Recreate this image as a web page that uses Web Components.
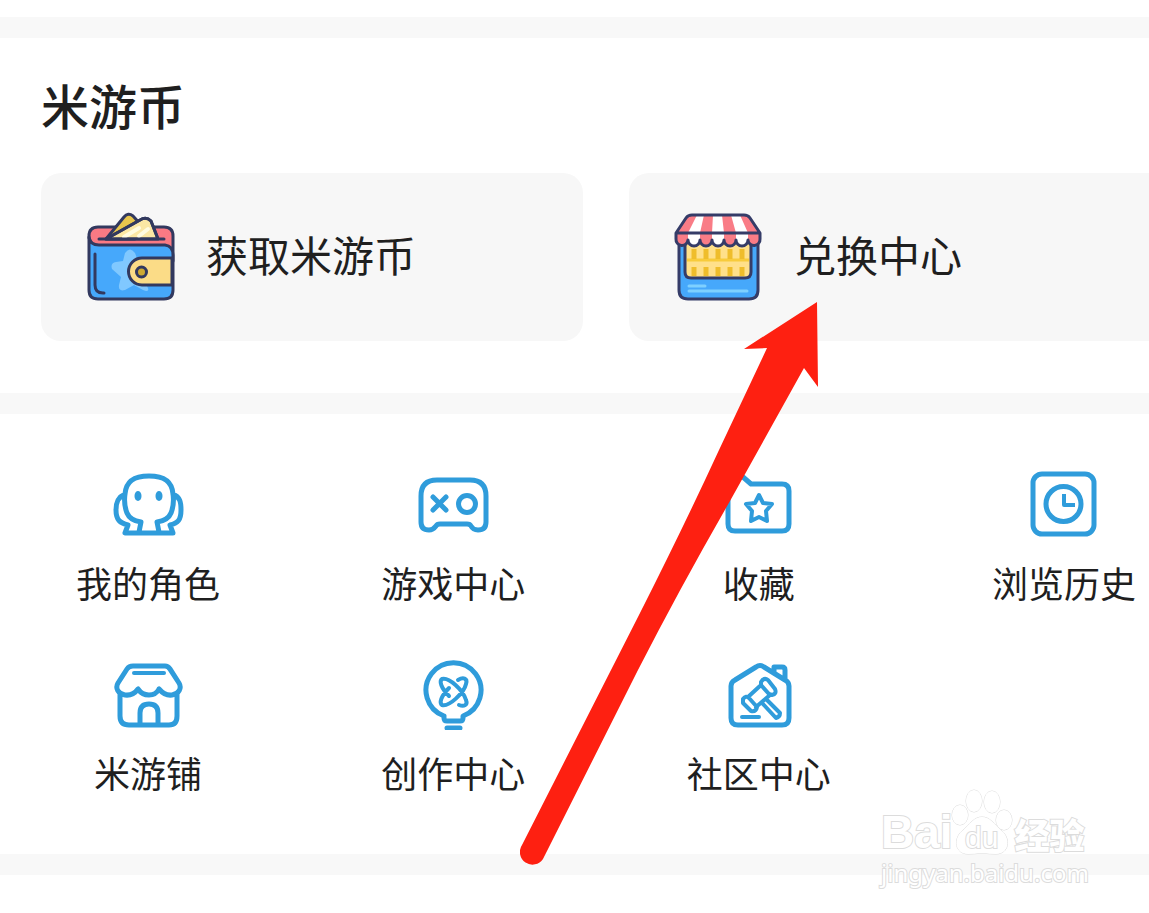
<!DOCTYPE html>
<html lang="zh-CN">
<head>
<meta charset="utf-8">
<meta name="viewport" content="width=device-width, initial-scale=1">
<title>米游币</title>
<style>
body { margin: 0; background: #fff; color: #1f1f1f; font-family: "Noto Sans CJK SC", "Liberation Sans", sans-serif; }
</style>
</head>
<body>
<coin-page></coin-page>
<script>
const ICONS = {
  wallet: `<svg viewBox="0 0 92 92" fill="none" stroke="#32395f" stroke-width="3" stroke-linejoin="round" stroke-linecap="round">
    <path d="M4 27V25Q4 16 13 16H79Q88 16 88 25V50H14Z" fill="#f97a84"/>
    <path d="M21 28 39 6Q43 1 48 5L58 16 50 28Z" fill="#e9c64d"/>
    <path d="M21 28 55 9Q61 5 66 10L73 28Z" fill="#fbe7a4"/>
    <path d="M39 26 54 17M54 25 63 18" stroke="#fffbe0" stroke-width="4"/>
    <path d="M21 28 55 9Q61 5 66 10L73 28M14 28H79"/>
    <path d="M4 26Q5 34 14 34H80Q88 35 88 44V79Q88 88 79 88H13Q4 88 4 79Z" fill="#46a8fb"/>
    <path d="M40 42Q45 35 50 42L53 50 62 50V75Q66 82 58 79L49 74 40 79Q33 81 34 74L36 66 27 58Q25 52 31 51L38 50Z" fill="#80c8ff" stroke="none"/>
    <path d="M87 47H57A13.500 13.500 0 0 0 57 74H87Z" fill="#fbdc87"/>
    <circle cx="56.500" cy="61" r="5" fill="#cda932"/>
    <path d="M10 43V74Q10 82 18 82H19"/>
  </svg>`,
  stall: `<svg viewBox="0 0 92 92" fill="none" stroke="#353c68" stroke-width="3" stroke-linejoin="round" stroke-linecap="round">
    <path d="M6 28H85V79Q85 88 76 88H15Q6 88 6 79Z" fill="#46a8fb"/>
    <path d="M12 28V61Q12 67 18 67H72Q78 67 78 61V28Z" fill="#ffe08a"/>
    <path d="M14 49H76" stroke="#f8cb3b" stroke-linecap="butt"/>
    <path d="M21 38V48M33 38V48M45 38V48M57 38V48M69 38V48M21 56V65M33 56V65M45 56V65M57 56V65M69 56V65" stroke="#efbd2b" stroke-width="5" stroke-linecap="butt"/>
    <path d="M15 4H76L87 22V28A6 6 0 0 1 75 29A6 6 0 0 1 63 29A6 6 0 0 1 51 29A6 6 0 0 1 39 29A6 6 0 0 1 27 29A6 6 0 0 1 15 29A6 6 0 0 1 3 28V22Z" fill="#fff" stroke="none"/>
    <path d="M15 4H24L15 22V29A6 6 0 0 1 3 28V22ZM31 4H40L39 22V29A6 6 0 0 1 27 29V22ZM49 4H58L63 22V29A6 6 0 0 1 51 29V22ZM67 4H76L87 22V28A6 6 0 0 1 75 29V22Z" fill="#f97c86" stroke="none"/>
    <path d="M19 4H71Q75 4 77 7L87 22V28A6 6 0 0 1 75 29A6 6 0 0 1 63 29A6 6 0 0 1 51 29A6 6 0 0 1 39 29A6 6 0 0 1 27 29A6 6 0 0 1 15 29A6 6 0 0 1 3 28V22L13 7Q15 4 19 4ZM3 22H87"/>
    <path d="M16 75H32M16 80H74" stroke="#7ed0ff"/>
  </svg>`,
  role: `<path d="M27 64 29 54C22 53 17 50 15 45C13 40 12 33 13 26C14 13 22 8 37 8S60 13 61 26C62 33 61 40 59 45C57 50 52 53 45 54L47 64M13 26C6 29 4 34 4 42C4 52 8 55 16 57L13 65H61L58 57C66 55 69 52 69 42C69 34 68 29 61 26"/><ellipse cx="26" cy="28" rx="3.500" ry="5" fill="currentColor" stroke="none"/><ellipse cx="47" cy="28" rx="3.500" ry="5" fill="currentColor" stroke="none"/>`,
  game: `<path d="M20 12H53Q69 12 69 28V54Q69 62 61 62Q56 62 54 58Q53 56 50 56H23Q20 56 19 58Q16 62 12 62Q4 62 4 54V28Q4 12 20 12Z"/><path d="M16 29 29 42M29 29 16 42"/><circle cx="50" cy="36" r="8.500"/>`,
  favourite: `<path d="M5 16Q5 9 12 9H20L28 16H59Q66 16 66 23V56Q66 63 59 63H12Q5 63 5 56Z"/><path stroke-width="4" d="m36 27 4 8 9 1-6 7 1 10-8-4-8 4 1-10-6-7 9-1Z"/>`,
  history: `<rect x="5" y="6" width="61" height="60" rx="9"/><circle cx="35.500" cy="36" r="17.500"/><path stroke-width="4" stroke-linecap="butt" d="M36 26V37H47"/>`,
  shop: `<path d="M21 8H53Q56 8 58 11L67 25C70 30 67 36 60 37Q53 38 47 31Q44 37 37 37Q30 37 26 31Q21 38 13 37C6 36 3 30 6 25L15 11Q17 8 21 8ZM8 36V58Q8 67 17 67H57Q65 67 65 58V36M28 66V55Q28 46 37 46T46 55V66"/><path stroke-width="4" d="M22 15H52"/>`,
  create: `<path d="M27 58A27.500 27.500 0 1 1 46 58V60Q46 63 43 63H30Q27 63 27 60V58M30 70H43"/><path stroke-width="4" d="M41 22C46 19 51 20 49 26C47 35 32 49 25 47C22 45 24 38 32 30M42 47C47 49 51 47 49 42C46 32 32 19 25 21C22 23 24 30 32 38"/>`,
  community: `<path d="M33 9Q37 6 41 9L62 22Q66 24 66 28V60Q66 67 59 67H15Q8 67 8 60V28Q8 24 12 22ZM51 14V9H59Q62 9 62 12V22"/><path stroke-width="4" d="M19 59H36M38 24Q41 19 45 22L52 31Q54 36 49 37L46 36 38 27ZM20 41Q23 37 26 40L34 49Q33 54 28 53L20 45ZM25 39 38 27M33 49 47 37M44 42 57 55Q57 59 53 60L40 46"/>`
};

class SectionBar extends HTMLElement {
  constructor() {
    super();
    this.attachShadow({ mode: "open" }).innerHTML = `<style>:host { display: block; height: 21px; background: #f8f8f8; }</style>`;
  }
}
customElements.define("section-bar", SectionBar);

class CoinTile extends HTMLElement {
  constructor() {
    super();
    this.attachShadow({ mode: "open" }).innerHTML = `
      <style>
        :host { display: block; }
        button { display: flex; align-items: center; gap: 29px; width: 100%; height: 168px; padding: 0 44px; border: 0; border-radius: 20px; background: #f7f7f7; color: inherit; font: inherit; font-size: 42px; line-height: 56px; text-align: left; white-space: nowrap; cursor: pointer; }
        svg { display: block; width: 92px; height: 92px; flex: none; }
        span { padding-bottom: 6px; }
      </style>
      <button type="button">${ICONS[this.getAttribute("icon")]}<span><slot></slot></span></button>`;
  }
}
customElements.define("coin-tile", CoinTile);

class MenuItem extends HTMLElement {
  constructor() {
    super();
    this.attachShadow({ mode: "open" }).innerHTML = `
      <style>
        :host { display: block; }
        a { display: flex; flex-direction: column; align-items: center; gap: 20px; color: inherit; text-decoration: none; font-size: 36px; line-height: 44px; white-space: nowrap; }
        svg { display: block; width: 72px; height: 72px; color: #2f9cdb; }
      </style>
      <a href="#"><svg viewBox="0 0 72 72" fill="none" stroke="currentColor" stroke-width="5" stroke-linecap="round" stroke-linejoin="round">${ICONS[this.getAttribute("icon")]}</svg><span><slot></slot></span></a>`;
  }
}
customElements.define("menu-item", MenuItem);

class PointerArrow extends HTMLElement {
  constructor() {
    super();
    this.attachShadow({ mode: "open" }).innerHTML = `
      <style>:host { display: block; width: 300px; height: 564px; pointer-events: none; } svg { display: block; }</style>
      <svg width="300" height="564" viewBox="0 0 300 564"><path fill="#fe2011" d="M297 0 224 47 247 46 199 148Q164 224 120 311L2 543A12 12 0 0 0 23 557L118 368Q160 286 210 199L284 66 298 85Z"/></svg>`;
  }
}
customElements.define("pointer-arrow", PointerArrow);

class SiteMark extends HTMLElement {
  constructor() {
    super();
    this.attachShadow({ mode: "open" }).innerHTML = `
      <style>
        :host { display: block; width: 210px; pointer-events: none; color: #fff; -webkit-text-stroke: 2px #dcdcdc; paint-order: stroke fill; font-family: "Liberation Sans", sans-serif; white-space: nowrap; }
        .brand { display: flex; align-items: flex-end; height: 68px; }
        b { font-size: 46px; line-height: 48px; }
        .paw { display: block; width: 58px; height: 68px; flex: none; overflow: visible; }
        .cn { font-family: "Noto Sans CJK SC", sans-serif; font-weight: 900; font-size: 35px; line-height: 44px; margin-left: 4px; }
        .site { font-family: "Noto Sans", sans-serif; font-size: 24px; line-height: 34px; }
      </style>
      <div class="brand"><b>Bai</b>
        <svg class="paw" viewBox="0 0 58 68"><g fill="#fff" stroke="#dcdcdc" stroke-width="1"><ellipse cx="7" cy="27" rx="8" ry="10"/><ellipse cx="21" cy="13" rx="8" ry="11"/><ellipse cx="39" cy="14" rx="8" ry="11"/><ellipse cx="51" cy="32" rx="8" ry="10"/><path d="M29 29C37 29 41 36 49 43C58 51 56 66 43 66Q37 66 29 65Q21 66 15 66C2 66 0 51 9 43C17 36 21 29 29 29Z"/></g><text x="12" y="60" font-size="30" fill="#fff" stroke="#dcdcdc" stroke-width="2">du</text></svg>
        <span class="cn">经验</span></div>
      <div class="site">jingyan.baidu.com</div>`;
  }
}
customElements.define("site-mark", SiteMark);

class CoinPage extends HTMLElement {
  constructor() {
    super();
    this.attachShadow({ mode: "open" }).innerHTML = `
      <style>
        :host { display: block; position: relative; overflow: hidden; padding: 17px 0 38px; }
        main { width: calc(100% + 63px); }
        .coins { padding: 38px 41px 52px; }
        h1 { margin: 0 0 41px; font-size: 48px; line-height: 56px; font-weight: 500; }
        .tiles { display: grid; grid-template-columns: 1fr 1fr; gap: 46px; }
        nav { display: grid; grid-template-columns: repeat(4, 144px); justify-content: space-between; row-gap: 54px; padding: 54px 76px 60px; }
        pointer-arrow { position: absolute; left: 520px; top: 302px; }
        site-mark { position: absolute; left: 881px; top: 788px; }
      </style>
      <main>
        <section-bar></section-bar>
        <section class="coins">
          <h1>米游币</h1>
          <div class="tiles">
            <coin-tile icon="wallet">获取米游币</coin-tile>
            <coin-tile icon="stall">兑换中心</coin-tile>
          </div>
        </section>
        <section-bar></section-bar>
        <nav>
          <menu-item icon="role">我的角色</menu-item>
          <menu-item icon="game">游戏中心</menu-item>
          <menu-item icon="favourite">收藏</menu-item>
          <menu-item icon="history">浏览历史</menu-item>
          <menu-item icon="shop">米游铺</menu-item>
          <menu-item icon="create">创作中心</menu-item>
          <menu-item icon="community">社区中心</menu-item>
        </nav>
        <section-bar></section-bar>
      </main>
      <pointer-arrow></pointer-arrow>
      <site-mark></site-mark>`;
  }
}
customElements.define("coin-page", CoinPage);
</script>
</body>
</html>
